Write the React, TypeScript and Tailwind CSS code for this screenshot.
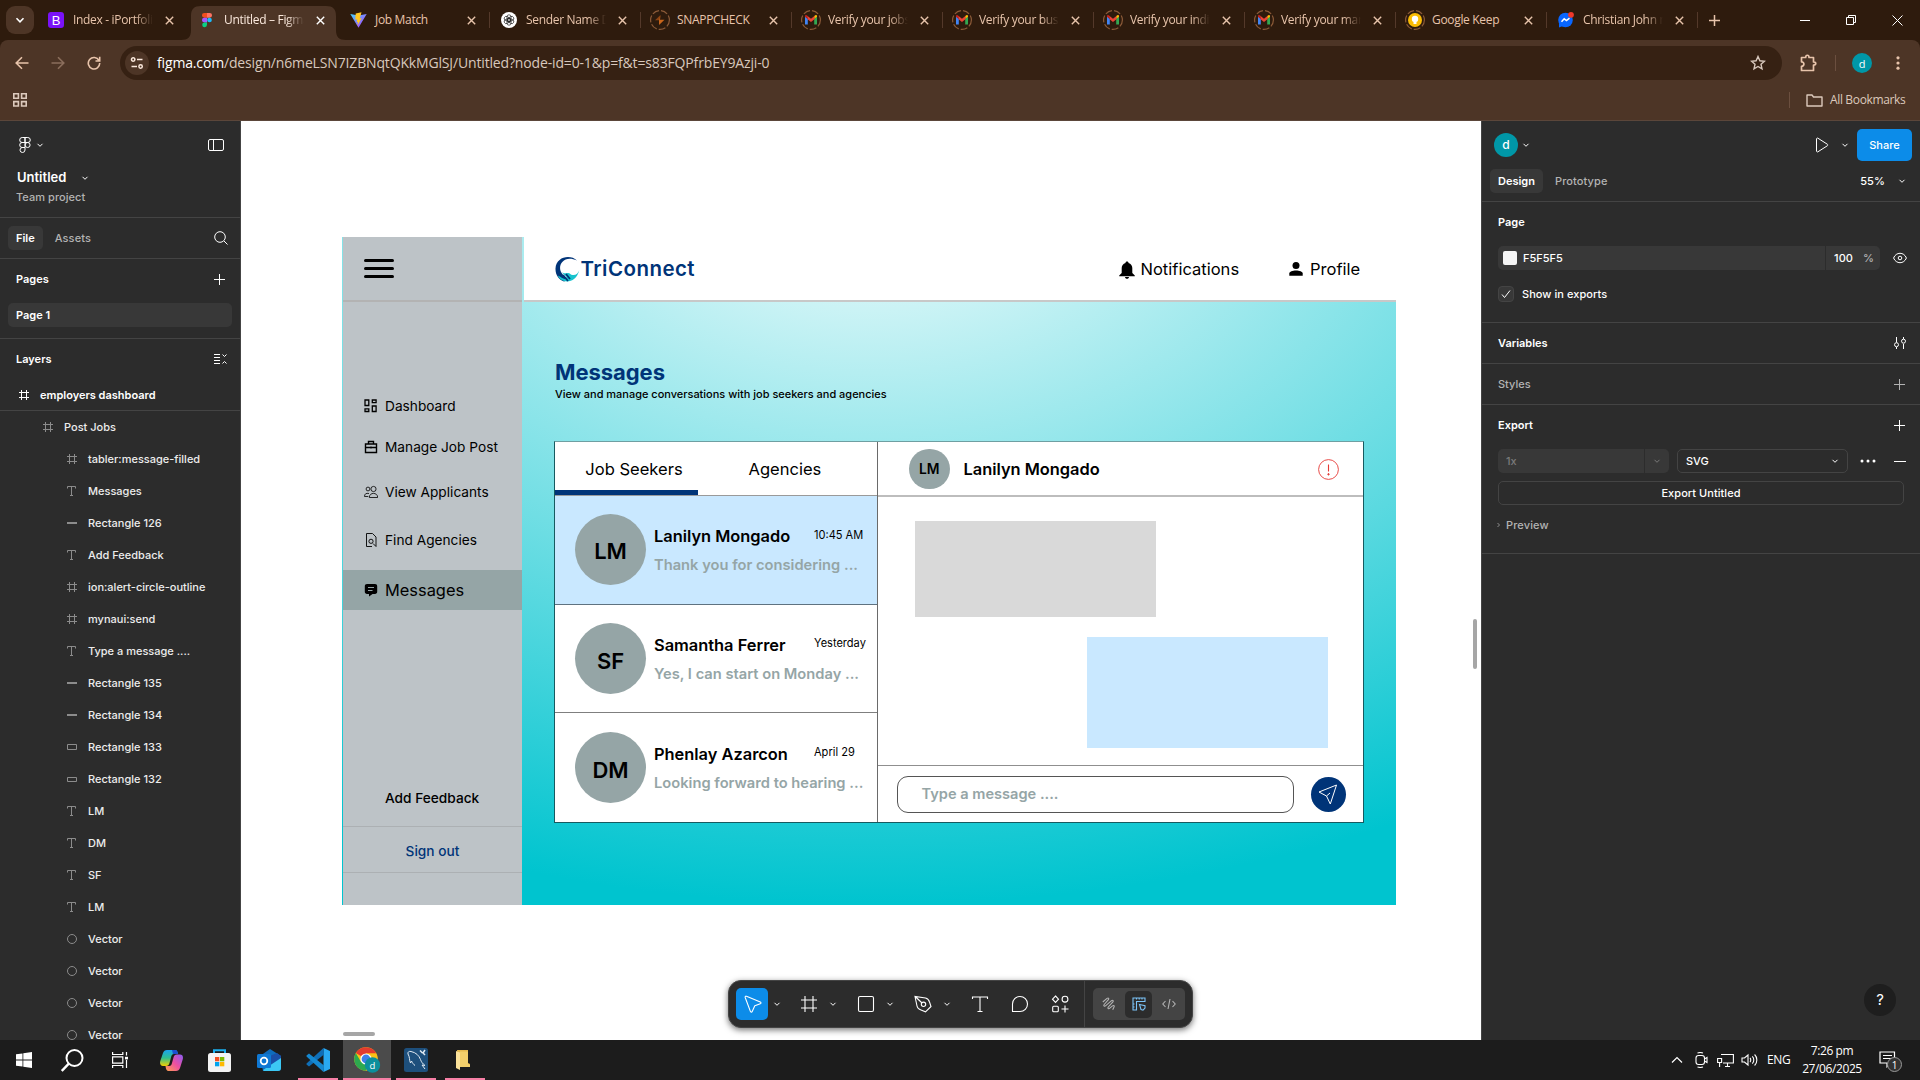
import type { ReactNode } from "react";

type IconProps = { className?: string };

function Chevron({ className = "" }: IconProps) {
  return (
    <svg className={"shrink-0 " + className} width="8" height="8" viewBox="0 0 8 8" fill="none" stroke="currentColor" strokeWidth="1">
      <path d="M1.5 2.8 4 5.3 6.5 2.8" />
    </svg>
  );
}

/* ---------- browser ---------- */

function GmailIcon() {
  return (
    <svg width="20" height="20" viewBox="0 0 20 20" className="-mx-0.5 shrink-0">
      <circle cx="10" cy="10" r="9.4" fill="none" stroke="#8b5a38" strokeWidth="1.2" strokeDasharray="7 2" />
      <path d="M4 6.5V14.500h2.800V9z" fill="#4285f4" />
      <path d="M16 6.5V14.500h-2.800V9z" fill="#34a853" />
      <path d="M4 6.800 6.800 9V6L5.600 5.200C4.800 4.800 4 5.400 4 6.200z" fill="#c5221f" />
      <path d="M16 6.800 13.200 9V6l1.200-.8c.8-.4 1.600.2 1.600 1z" fill="#fbbc04" />
      <path d="M6.600 6 10 8.800 13.400 6v3.200L10 12 6.600 9.200z" fill="#ea4335" />
    </svg>
  );
}

const FAVICONS: Record<string, ReactNode> = {
  bootstrap: (
    <span className="flex size-4 shrink-0 items-center justify-center rounded-[3px] bg-[#7a12f8] font-['Liberation_Sans'] text-[13px] leading-none text-white">B</span>
  ),
  figma: (
    <svg width="16" height="16" viewBox="0 0 16 16" className="shrink-0">
      <path d="M5.300 1H8v4.700H5.300a2.350 2.350 0 0 1 0-4.700z" fill="#f24e1e" />
      <path d="M8 1h2.700a2.350 2.350 0 0 1 0 4.700H8z" fill="#ff7262" />
      <path d="M5.300 5.700H8v4.700H5.300a2.350 2.350 0 0 1 0-4.700z" fill="#a259ff" />
      <circle cx="10.500" cy="8" r="2.350" fill="#1abcfe" />
      <path d="M5.300 10.400H8v2.400a2.400 2.400 0 1 1-2.700-2.400z" fill="#0acf83" />
    </svg>
  ),
  vite: (
    <svg width="17" height="16" viewBox="0 0 17 16" className="shrink-0">
      <defs>
        <linearGradient id="vg" x1="0" y1="0" x2="1" y2="1">
          <stop offset="0" stopColor="#41d1ff" />
          <stop offset="1" stopColor="#bd34fe" />
        </linearGradient>
      </defs>
      <path d="M.3 2 8.500 15.800 16.700 2 8.500 3.500z" fill="url(#vg)" />
      <path d="m11.500.3-5.800 1.200-.4 6.200 1.900-.4-.5 3 1.300-.4-.6 3.600 4.300-7.300-2 .4.900-3.200z" fill="#ffc720" />
    </svg>
  ),
  gpt: (
    <svg width="16" height="16" viewBox="0 0 16 16" className="shrink-0">
      <circle cx="8" cy="8" r="8" fill="#fff" />
      <g fill="none" stroke="#222" strokeWidth=".7">
        <rect x="6" y="2.800" width="4" height="6.600" rx="2" />
        <rect x="6" y="2.800" width="4" height="6.600" rx="2" transform="rotate(60 8 8)" />
        <rect x="6" y="2.800" width="4" height="6.600" rx="2" transform="rotate(120 8 8)" />
        <rect x="6" y="2.800" width="4" height="6.600" rx="2" transform="rotate(180 8 8)" />
        <rect x="6" y="2.800" width="4" height="6.600" rx="2" transform="rotate(240 8 8)" />
        <rect x="6" y="2.800" width="4" height="6.600" rx="2" transform="rotate(300 8 8)" />
      </g>
    </svg>
  ),
  snapp: (
    <svg width="20" height="20" viewBox="0 0 20 20" className="-mx-0.5 shrink-0">
      <circle cx="10" cy="10" r="9.400" fill="none" stroke="#8b5a38" strokeWidth="1.2" strokeDasharray="7 2" />
      <path d="M10.500 5 5 10.200h4.500z" fill="#8a4314" />
      <path d="M9 15 14.500 9.800H10l.5-4.800-1.500 5.500z" fill="#c9651a" />
    </svg>
  ),
  gmail: <GmailIcon />,
  keep: (
    <svg width="20" height="20" viewBox="0 0 20 20" className="-mx-0.5 shrink-0">
      <circle cx="10" cy="10" r="9.400" fill="none" stroke="#8b5a38" strokeWidth="1.2" strokeDasharray="7 2" />
      <circle cx="10" cy="10" r="7" fill="#fbbc04" />
      <circle cx="10" cy="9" r="3.200" fill="#fff" />
      <path d="M8.500 12h3v2h-3z" fill="#fff" />
    </svg>
  ),
  messenger: (
    <svg width="16" height="16" viewBox="0 0 16 16" className="shrink-0 overflow-visible">
      <circle cx="7.500" cy="8" r="7.300" fill="#0866ff" />
      <path d="M1 11v4.500l4-1.500z" fill="#0866ff" />
      <path d="m3.500 9.800 2.700-3 2.300 1.800 3-2.400" fill="none" stroke="#fff" strokeWidth="1.500" />
      <circle cx="13" cy="2.800" r="2.900" fill="#f0382b" />
    </svg>
  ),
};

const TABS = [
  { icon: "bootstrap", label: "Index - iPortfolio", active: false, line: false },
  { icon: "figma", label: "Untitled – Figma", active: true, line: false },
  { icon: "vite", label: "Job Match", active: false, line: true },
  { icon: "gpt", label: "Sender Name Dis", active: false, line: true },
  { icon: "snapp", label: "SNAPPCHECK", active: false, line: true },
  { icon: "gmail", label: "Verify your jobstr", active: false, line: true },
  { icon: "gmail", label: "Verify your busine", active: false, line: true },
  { icon: "gmail", label: "Verify your indivi", active: false, line: true },
  { icon: "gmail", label: "Verify your market", active: false, line: true },
  { icon: "keep", label: "Google Keep", active: false, line: true },
  { icon: "messenger", label: "Christian John me", active: false, line: true },
];

function TabStrip() {
  return (
    <div className="flex h-10 bg-[#2e1b0d] text-[#e8c4ab]">
      <div className="flex w-[37px] items-center pl-1.5">
        <div className="flex size-7 items-center justify-center rounded-[9px] bg-[#4d3526] text-white">
          <svg width="10" height="10" viewBox="0 0 10 10" fill="none" stroke="currentColor" strokeWidth="1.600"><path d="m1.500 3.300 3.500 3.500 3.500-3.500" /></svg>
        </div>
      </div>
      {TABS.map((t, i) => (
        <div key={i} className="relative flex w-[151px] items-center">
          {t.active && (
            <svg className="absolute -left-[7px] top-1.5" width="165" height="34" viewBox="0 0 165 34">
              <path d="M0 34c7 0 10-3 10-10V10C10 3 13 0 20 0h125c7 0 10 3 10 10v14c0 7 3 10 10 10z" fill="#4d3526" />
            </svg>
          )}
          <div className="relative flex w-full items-center pl-[11px]">
            <div className="flex w-4 justify-center">{FAVICONS[t.icon]}</div>
            <div className={"ml-2 w-[81px] overflow-hidden whitespace-nowrap pl-px text-xs tracking-[-0.32px] " + (t.label.length > 12 ? "[mask-image:linear-gradient(90deg,#000_78%,transparent)] " : "") + (t.active ? "text-[#fbe9dd]" : "")}>{t.label}</div>
            <svg className={"ml-[11.5px] shrink-0 " + (t.active ? "text-white" : "")} width="9" height="9" viewBox="0 0 9 9" stroke="currentColor" strokeWidth="1.400"><path d="m.8.8 7.400 7.400M8.200.8.800 8.200" /></svg>
          </div>
          {t.line && <div className="h-4 w-px shrink-0 bg-[#54392a]" />}
        </div>
      ))}
      <div className="flex grow items-center pl-[11px]">
        <svg width="11" height="11" viewBox="0 0 11 11" stroke="currentColor" strokeWidth="1.500"><path d="M5.500 0v11M0 5.500h11" /></svg>
      </div>
      <div className="flex w-[138px] items-center text-white">
        <div className="flex w-[46px] justify-center"><div className="h-px w-2.5 bg-white" /></div>
        <div className="flex w-[46px] justify-center">
          <svg width="10" height="10" viewBox="0 0 10 10" fill="none" stroke="currentColor"><path d="M.5 2.500h7v7h-7zM2.500 2.500v-2h7v7h-2" /></svg>
        </div>
        <div className="flex w-[46px] justify-center">
          <svg width="11" height="11" viewBox="0 0 11 11" stroke="currentColor"><path d="m.5.5 10 10M10.500.5l-10 10" /></svg>
        </div>
      </div>
    </div>
  );
}

function AddressBar() {
  return (
    <div className="bg-[#2e1b0d]">
      <div className="h-[81px] rounded-t-[8px] border-b border-[#5b463a] bg-[#4d3526] text-[#e8c4ab]">
        <div className="flex h-[46px] items-center">
          <svg className="ml-[15px]" width="14" height="14" viewBox="0 0 14 14" fill="none" stroke="currentColor" strokeWidth="1.600"><path d="M13.500 7H1.500M7 1.200 1.200 7 7 12.800" /></svg>
          <svg className="ml-[22px] text-[#8b6e5c]" width="14" height="14" viewBox="0 0 14 14" fill="none" stroke="currentColor" strokeWidth="1.600"><path d="M.5 7h12M7 1.200 12.800 7 7 12.800" /></svg>
          <svg className="ml-[22px]" width="14" height="14" viewBox="0 0 14 14" fill="none" stroke="currentColor" strokeWidth="1.600"><path d="M12 4.500A5.700 5.700 0 1 0 12.700 7M12.700.800V5H8.500" /></svg>
          <div className="ml-[19px] flex h-[34px] w-[1662px] items-center rounded-full bg-[#362113] pl-[5px] text-[#d8c8bd]">
            <div className="flex size-6 items-center justify-center rounded-full bg-[#4d3526]">
              <svg width="14" height="14" viewBox="0 0 14 14" fill="none" stroke="#fbe9dd" strokeWidth="1.500"><circle cx="3.200" cy="3.500" r="1.700" /><path d="M7 3.500h5.500M1.500 10.500H7" /><circle cx="10.600" cy="10.500" r="1.700" /></svg>
            </div>
            <div className="ml-2 text-sm tracking-[-0.155px] whitespace-nowrap">
              <span className="text-white">figma.com</span>/design/n6meLSN7IZBNqtQKkMGlSJ/Untitled?node-id=0-1&amp;p=f&amp;t=s83FQPfrbEY9Azji-0
            </div>
            <svg className="mr-[16px] ml-auto" width="16" height="16" viewBox="0 0 16 16" fill="none" stroke="currentColor" strokeWidth="1.400"><path d="m8 1.500 1.900 4.300 4.600.4-3.500 3.100 1 4.600L8 11.500l-4 2.400 1-4.600L1.500 6.200l4.600-.4z" /></svg>
          </div>
          <svg className="ml-[18px]" width="17" height="18" viewBox="0 0 17 18" fill="none" stroke="currentColor" strokeWidth="1.700"><path d="M1.500 3.500h4.200c0-3 3.300-3 3.300 0h4.500V8c3 0 3 3 0 3v5.500h-12v-4.200c3.200 0 3.200-4.500 0-4.500z" strokeLinejoin="round" /></svg>
          <div className="ml-[18px] h-4 w-px bg-[#6b4f3f]" />
          <div className="ml-[16px] flex size-5 items-center justify-center rounded-full bg-[#0097a7] text-[11px] leading-none text-white">d</div>
          <svg className="ml-[24px]" width="4" height="14" viewBox="0 0 4 14" fill="currentColor"><circle cx="2" cy="1.800" r="1.600" /><circle cx="2" cy="7" r="1.600" /><circle cx="2" cy="12.200" r="1.600" /></svg>
        </div>
        <div className="flex h-7 items-center text-[#dcc9bc]">
          <svg className="ml-[13px]" width="14" height="14" viewBox="0 0 14 14" fill="none" stroke="currentColor" strokeWidth="1.600"><path d="M.8.8h4.600v4.400H.8zM8.600.8h4.600v4.400H8.600zM.8 8.600h4.600V13H.8zM8.600 8.600h4.600V13H8.600z" /></svg>
          <div className="ml-auto h-4 w-px bg-[#6b4f3f]" />
          <svg className="ml-[16px]" width="17" height="13" viewBox="0 0 17 13" fill="none" stroke="currentColor" strokeWidth="1.400"><path d="M1 1h5l1.500 2H16v9H1z" strokeLinejoin="round" /></svg>
          <div className="mr-[15px] ml-[7px] w-[75px] text-xs tracking-[-0.35px] whitespace-nowrap">All Bookmarks</div>
        </div>
      </div>
    </div>
  );
}

/* ---------- left panel ---------- */

const LAYER_ICONS: Record<string, ReactNode> = {
  frame: <path d="M2.500 0v10M7.500 0v10M0 2.500h10M0 7.500h10" />,
  text: <path d="M.5 2.500V.5h8v2M4.500.5v9M3 9.500h3" />,
  line: <path d="M0 5h10" strokeWidth="2" />,
  rect: <path d="M.5 2.500h9v5h-9z" />,
  thin: <path d="M.5 3.500h9v4h-9z" />,
  circle: <circle cx="5" cy="5" r="4.500" />,
};

const LAYERS: [string, string][] = [
  ["frame", "tabler:message-filled"],
  ["text", "Messages"],
  ["line", "Rectangle 126"],
  ["text", "Add Feedback"],
  ["frame", "ion:alert-circle-outline"],
  ["frame", "mynaui:send"],
  ["text", "Type a message ...."],
  ["line", "Rectangle 135"],
  ["line", "Rectangle 134"],
  ["rect", "Rectangle 133"],
  ["thin", "Rectangle 132"],
  ["text", "LM"],
  ["text", "DM"],
  ["text", "SF"],
  ["text", "LM"],
  ["circle", "Vector"],
  ["circle", "Vector"],
  ["circle", "Vector"],
  ["circle", "Vector"],
];

function LayerIcon({ kind, className }: { kind: string; className: string }) {
  return (
    <svg className={"mr-[11px] shrink-0 " + className} width="10" height="10" viewBox="0 0 10 10" fill="none" stroke="currentColor">
      {LAYER_ICONS[kind]}
    </svg>
  );
}

function LeftPanel() {
  return (
    <aside className="h-[919px] w-[241px] shrink-0 overflow-hidden border-r border-[#444] bg-[#2c2c2c] text-[11px] font-medium text-white">
      <div className="flex h-12 items-center pr-4 pl-[19px]">
        <svg width="12" height="16" viewBox="0 0 12 16" fill="none" stroke="currentColor"><path d="M6 .5H3.200a2.500 2.500 0 0 0 0 5H6zm0 0h2.800a2.500 2.500 0 0 1 0 5H6zM6 5.500H3.200a2.500 2.500 0 0 0 0 5H6zm0 5H3.200A2.500 2.500 0 1 0 6 13z" /><circle cx="8.600" cy="8" r="2.500" /></svg>
        <Chevron className="ml-[5px]" />
        <svg className="ml-auto" width="16" height="12" viewBox="0 0 16 12" fill="none" stroke="currentColor"><rect x=".5" y=".5" width="15" height="11" rx="1.500" /><path d="M5.500.5v11" /></svg>
      </div>
      <div className="flex h-[18px] items-center pl-[17px] text-[13px] font-semibold">
        Untitled
        <Chevron className="ml-[15px]" />
      </div>
      <div className="mt-0.5 flex h-4 items-center pl-4 tracking-[0.05px] text-[#b3b3b3]">Team project</div>
      <div className="mt-3 flex h-[42px] items-center border-y border-[#444] pr-[12px] pl-2">
        <div className="flex h-6 items-center rounded-[5px] bg-[#383838] px-2 font-semibold">File</div>
        <div className="ml-[12px] tracking-[0.1px] text-[#b3b3b3]">Assets</div>
        <svg className="ml-auto" width="14" height="14" viewBox="0 0 14 14" fill="none" stroke="currentColor"><circle cx="6" cy="6" r="5.300" /><path d="m10 10 3.500 3.500" /></svg>
      </div>
      <div className="flex h-10 items-center justify-between pr-[15px] pl-4 font-semibold">
        Pages
        <svg width="11" height="11" viewBox="0 0 11 11" stroke="currentColor"><path d="M5.500 0v11M0 5.500h11" /></svg>
      </div>
      <div className="mx-2 mt-1 flex h-6 items-center rounded-[5px] bg-[#383838] pl-2 font-semibold">Page 1</div>
      <div className="mt-[11px] flex h-[41px] items-center justify-between border-t border-[#444] pr-[13px] pl-4 font-semibold">
        Layers
        <svg width="13" height="12" viewBox="0 0 13 12" fill="none" stroke="currentColor"><path d="M0 1.500h6M0 4.500h6M0 7.500h6M0 10.500h6M8.500 1.500l2 2 2-2M8.500 10.500l2-2 2 2" /></svg>
      </div>
      <div className="flex h-8 items-center border-b border-[#444] pt-px pl-[19px] font-semibold">
        <LayerIcon kind="frame" className="text-white" />
        employers dashboard
      </div>
      <div className="flex h-8 items-center pl-[43px] text-[#ececec]">
        <LayerIcon kind="frame" className="text-[#8c8c8c]" />
        Post Jobs
      </div>
      {LAYERS.map(([kind, label], i) => (
        <div key={i} className="flex h-8 items-center pl-[67px] text-[#ececec]">
          <LayerIcon kind={kind} className="text-[#8c8c8c]" />
          {label}
        </div>
      ))}
    </aside>
  );
}

/* ---------- right panel ---------- */

function Plus() {
  return <svg width="11" height="11" viewBox="0 0 11 11" stroke="currentColor"><path d="M5.500 0v11M0 5.500h11" /></svg>;
}

function RightPanel() {
  return (
    <aside className="flex h-[919px] w-[439px] shrink-0 flex-col border-l border-[#444] bg-[#2c2c2c] text-[11px] font-medium text-white">
      <div className="flex h-12 items-center pr-2 pl-3">
        <div className="flex size-6 items-center justify-center rounded-full bg-[#0097a7] text-[12px] leading-none">d</div>
        <Chevron className="ml-1" />
        <svg className="ml-auto" width="14" height="16" viewBox="0 0 14 16" fill="none" stroke="currentColor"><path d="M1.500 2v12c0 .8.700 1.200 1.400.8l9.400-6c.7-.4.700-1.200 0-1.600l-9.400-6c-.7-.4-1.400 0-1.400.8z" /></svg>
        <Chevron className="mr-2 ml-[12px]" />
        <div className="flex h-8 w-[55px] items-center justify-center rounded-[5px] bg-[#0c8ce9]">Share</div>
      </div>
      <div className="flex h-[33px] items-start border-b border-[#444] px-2">
        <div className="flex h-6 items-center rounded-[5px] bg-[#383838] px-2 font-semibold">Design</div>
        <div className="ml-[12px] flex h-6 items-center tracking-[0.1px] text-[#b3b3b3]">Prototype</div>
        <div className="ml-auto flex h-6 items-center tracking-[0.1px]">55%</div>
        <Chevron className="mt-2 mr-[6px] ml-[13px]" />
      </div>
      <div className="h-[121px] border-b border-[#444] pl-4">
        <div className="flex h-10 items-center font-semibold">Page</div>
        <div className="mt-1 flex h-6 items-center">
          <div className="flex h-6 w-[327px] items-center rounded-l-[5px] bg-[#383838] pl-[5px]">
            <div className="mr-1.5 size-3.5 rounded-[2px] bg-[#f5f5f5]" />
            F5F5F5
          </div>
          <div className="ml-px flex h-6 w-[54px] items-center rounded-r-[5px] bg-[#383838] pl-[8px] tracking-[0.1px]">
            100<span className="ml-[10px] text-[#b3b3b3]">%</span>
          </div>
          <svg className="ml-[13px]" width="14" height="12" viewBox="0 0 14 12" fill="none" stroke="currentColor"><path d="M.6 6C3-.3 11-.3 13.400 6 11 12.300 3 12.300.6 6z" /><circle cx="7" cy="6" r="1.800" /></svg>
        </div>
        <div className="mt-4 flex h-4 items-center tracking-[0.05px]">
          <div className="mr-2 flex size-4 items-center justify-center rounded-[4px] border border-[#444] bg-[#383838]">
            <svg width="10" height="10" viewBox="0 0 10 10" fill="none" stroke="currentColor"><path d="M1 5.500 3.500 8.500 9 1.500" /></svg>
          </div>
          Show in exports
        </div>
      </div>
      <div className="flex h-[41px] items-center justify-between border-b border-[#444] pr-[14px] pl-4 font-semibold">
        Variables
        <svg width="12" height="12" viewBox="0 0 12 12" fill="none" stroke="currentColor"><path d="M2.500 0v5.500M2.500 10v2M9.500 7v5M9.500 0v2" /><circle cx="2.500" cy="7.700" r="2" /><circle cx="9.500" cy="4.200" r="2" /></svg>
      </div>
      <div className="flex h-[41px] items-center justify-between border-b border-[#444] pr-[15px] pl-4 text-[#b3b3b3]">
        Styles
        <Plus />
      </div>
      <div className="h-[149px] border-b border-[#444] pl-4">
        <div className="flex h-10 items-center justify-between pr-[15px] font-semibold">
          Export
          <Plus />
        </div>
        <div className="mt-1 flex h-6 items-center">
          <div className="flex h-6 w-[146px] items-center rounded-l-[5px] bg-[#383838] pl-2 text-[#7a7a7a]">1x</div>
          <div className="ml-px flex h-6 w-6 items-center justify-center rounded-r-[5px] bg-[#383838] text-[#7a7a7a]"><Chevron /></div>
          <div className="ml-2 flex h-6 w-[171px] items-center justify-between rounded-[5px] border border-[#444] pr-[8px] pl-2">SVG<Chevron /></div>
          <svg className="ml-[12px]" width="16" height="4" viewBox="0 0 16 4" fill="currentColor"><circle cx="2" cy="2" r="1.500" /><circle cx="8" cy="2" r="1.500" /><circle cx="14" cy="2" r="1.500" /></svg>
          <div className="ml-[18px] h-px w-3 bg-white" />
        </div>
        <div className="mt-2 flex h-6 w-[406px] items-center justify-center rounded-[5px] border border-[#444] tracking-[0.05px]">Export Untitled</div>
        <div className="mt-2 flex h-6 items-center text-[#b3b3b3]">
          <svg className="mr-1 -ml-0.5" width="6" height="8" viewBox="0 0 6 8" fill="none" stroke="#8c8c8c"><path d="M1.500 2 3.500 4l-2 2" /></svg>
          <span className="tracking-[0.12px]">Preview</span>
        </div>
      </div>
      <div className="mt-auto mr-6 mb-6 ml-auto flex size-8 items-center justify-center rounded-full bg-[#1e1e1e] text-[15px] font-normal">?</div>
    </aside>
  );
}

/* ---------- dashboard design ---------- */

const NAV = [
  {
    label: "Dashboard",
    gap: "mt-[84px]",
    icon: <path d="M1 1h3.800v5.500H1zM8.300 1h3.800v2.700H8.300zM8.300 7h3.800v5.500H8.300zM1 9.800h3.800v2.700H1z" strokeWidth="1.300" />,
  },
  {
    label: "Manage Job Post",
    gap: "mt-px",
    icon: <path d="M1.500 4h11v8.500h-11zM4.500 4V1.500h5V4M1.500 7.500h11M7 6.500v2" strokeWidth="1.400" />,
  },
  {
    label: "View Applicants",
    gap: "mt-[5px]",
    icon: (
      <g strokeWidth=".8">
        <circle cx="9.500" cy="4" r="2.600" /><circle cx="4" cy="4" r="1.900" />
        <path d="M5.300 12.500c0-5.500 8.400-5.500 8.400 0zM5 8.500C2 7.800.5 9 .5 11.500h3.800" />
      </g>
    ),
  },
  {
    label: "Find Agencies",
    gap: "mt-[8px]",
    icon: (
      <g strokeWidth=".9">
        <path d="M8 13.500H2.500v-13h6l3.500 3.500v9.500l-3-3" /><circle cx="7" cy="8.300" r="2.100" />
      </g>
    ),
  },
];

function DesignSidebar() {
  return (
    <div className="mr-[1.5px] ml-[1.5px] flex w-[179px] shrink-0 flex-col bg-[#bdc3c7] text-[13.700px] text-black">
      <div className="flex h-[65px] shrink-0 flex-col justify-center gap-[5px] border-b-2 border-[#b3b3b3] pl-[20.5px]">
        <div className="h-[3px] w-[30px] rounded-full bg-black" />
        <div className="h-[3px] w-[30px] rounded-full bg-black" />
        <div className="h-[3px] w-[30px] rounded-full bg-black" />
      </div>
      {NAV.map((n) => (
        <div key={n.label} className={"flex h-10 shrink-0 items-center whitespace-nowrap pl-[21px] " + n.gap}>
          <svg className="mr-[7px] shrink-0" width="14" height="14" viewBox="0 0 14 14" fill="none" stroke="#000">{n.icon}</svg>
          {n.label}
        </div>
      ))}
      <div className="mt-[10px] flex h-10 shrink-0 items-center bg-[#95a5a6] pl-[21px] text-[16.400px]">
        <svg className="mr-[7px]" width="14" height="14" viewBox="0 0 14 14"><path d="M3 1h8c1.300 0 2.200.9 2.200 2.200v5.600c0 1.300-.9 2.200-2.200 2.200H8.500L5 13.500V11H3C1.700 11 .8 10.100.8 8.800V3.200C.8 1.900 1.700 1 3 1z" /><path d="M4 4.500h6M4 7.500h4.500" stroke="#95a5a6" strokeWidth="1.200" /></svg>
        Messages
      </div>
      <div className="mt-auto flex h-5 items-center pl-[42px] font-medium">Add Feedback</div>
      <div className="mt-[18px] flex h-[47px] shrink-0 items-center justify-center border-y border-[#acb0b3] pt-[3px] font-medium text-[#003478]">Sign out</div>
      <div className="h-8 shrink-0" />
    </div>
  );
}

function DesignHeader() {
  return (
    <div className="flex h-[65px] items-center border-b-2 border-[#c8c8c8] bg-white pl-[31px] text-[16.550px] text-black">
      <svg width="25" height="26" viewBox="0 0 25 26">
        <path d="M22 4.500C15-2 1 1 .5 12.500.3 19 4 24 9 25.500l4-1.500c-1-3-5-4-7-8C2.500 9 9-1.500 22 4.500z" fill="#003478" />
        <path d="M24.300 14c-1 3-3 5-6 5-3 .5-3-2.500-6-2-2 .3-3 .5-5.500-.5 3 2.500 3 3 5 4.500l-2 2c-2-.5-4-2-7-3.500 3 8 18 9.500 21.500-5.500z" fill="#17c3cd" />
        <path d="m8 19 5 6M11 18l4 5" stroke="#003478" strokeWidth="1.800" />
      </svg>
      <div className="mt-0.5 ml-px text-[20.500px] font-semibold tracking-[0.45px] text-[#003478]">TriConnect</div>
      <svg className="mt-[3px] ml-auto" width="16" height="18" viewBox="0 0 16 18"><path d="M8 .5c1 0 1.500.6 1.500 1.400C12 2.600 13.300 4.600 13.300 7v5l2.500 2.500v.8H.2v-.8L2.700 12V7c0-2.400 1.300-4.400 3.800-5.100C6.500 1.100 7 .5 8 .5zM6 16h4c0 2.400-4 2.400-4 0z" /></svg>
      <div className="mt-[2px] ml-[6px] w-[100px]">Notifications</div>
      <svg className="ml-[48px]" width="14" height="14" viewBox="0 0 14 14"><circle cx="7" cy="3.600" r="3.500" /><path d="M.3 13.800v-2.200c0-4 13.400-4 13.400 0v2.200z" /></svg>
      <div className="mt-[2px] mr-[36px] ml-[7.5px] w-[50px]">Profile</div>
    </div>
  );
}

const THREADS = [
  { initials: "LM", name: "Lanilyn Mongado", time: "10:45 AM", text: "Thank you for considering ...", bg: "bg-[#c9e8ff]", edge: "border-b border-[#5f7280]", pad: "pt-[4px]" },
  { initials: "SF", name: "Samantha Ferrer", time: "Yesterday", text: "Yes, I can start on Monday ...", bg: "bg-white", edge: "border-b border-[#7f7f7f]", pad: "pt-[6px]" },
  { initials: "DM", name: "Phenlay Azarcon", time: "April 29", text: "Looking forward to hearing ...", bg: "bg-white", edge: "", pad: "pt-[6px]" },
];

function MessagesCard() {
  return (
    <div className="flex h-[382px] w-[810px] border border-[#175a60] border-t-[#6f9fa2] bg-white text-black">
      <div className="flex w-[323px] flex-col border-r border-[#6a6a6a]">
        <div className="flex h-[54px] shrink-0 border-b border-[#9a9a9a] text-[16.550px]">
          <div className="flex w-[143px] items-center justify-center border-b-[5px] border-[#003478] pt-[7px] pl-[15px] whitespace-nowrap">Job Seekers</div>
          <div className="flex items-center pt-[2px] pl-[50.5px]">Agencies</div>
        </div>
        {THREADS.map((t) => (
          <div key={t.initials} className={"flex h-[109px] items-center pl-5 " + t.bg + " " + t.edge}>
            <div className={"flex size-[71px] shrink-0 items-center justify-center rounded-full bg-[#95a5a6] text-[22px] font-semibold " + t.pad}>{t.initials}</div>
            <div className="ml-[8px] grow pt-[2px]">
              <div className="flex h-6 items-center">
                <div className="w-[160px] text-[16.400px] font-semibold whitespace-nowrap">{t.name}</div>
                <div className="-mt-[3px] text-[11.050px] whitespace-nowrap">{t.time}</div>
              </div>
              <div className="mt-[5px] flex h-6 items-center text-[14.700px] font-semibold whitespace-nowrap text-[#95a5a6]">{t.text}</div>
            </div>
          </div>
        ))}
      </div>
      <div className="flex grow flex-col">
        <div className="flex h-[55px] items-center border-b-2 border-[#bdbdbd] pt-px pr-6 pl-[31px]">
          <div className="flex size-[40.5px] items-center justify-center rounded-full bg-[#95a5a6] text-[13.800px] font-semibold">LM</div>
          <div className="mt-px ml-[14px] text-[16.400px] font-semibold">Lanilyn Mongado</div>
          <svg className="ml-auto" width="21" height="21" viewBox="0 0 21 21" fill="none" stroke="#e53935"><circle cx="10.500" cy="10.500" r="9.900" strokeWidth=".9" /><path d="M10.500 5.500v7" strokeWidth="1.100" /><circle cx="10.500" cy="15.300" r=".7" fill="#e53935" /></svg>
        </div>
        <div className="flex h-[269px] flex-col border-b border-[#8f8f8f] pr-[35px] pl-[36.5px]">
          <div className="mt-[23.5px] h-[96px] w-[241px] bg-[#d9d9d9]" />
          <div className="mt-5 ml-auto h-[111.5px] w-[241px] bg-[#c9e8ff]" />
        </div>
        <div className="flex grow items-center pt-px pl-[19px]">
          <div className="flex h-[37px] w-[397px] items-center rounded-[11px] border border-[#555] pt-px pl-[23.5px] text-[14.600px] font-semibold text-[#95a5a6]">Type a message ....</div>
          <div className="ml-[16.5px] flex size-[35.5px] items-center justify-center rounded-full bg-[#003478]">
            <svg width="20" height="21" viewBox="0 0 20 21" fill="none" stroke="#fff" strokeWidth="1" strokeLinejoin="round"><path d="M18.500 1 1 8l7.500 4 3.800 8zM8.500 12l3.500-3" /></svg>
          </div>
        </div>
      </div>
    </div>
  );
}

function DashboardDesign() {
  return (
    <div className="mt-[116px] ml-[100.5px] flex h-[668px] w-[1054.5px] overflow-hidden bg-[radial-gradient(1150px_735px_at_527px_-67px,#fafefe_0%,#00c4cf_100%)]">
      <DesignSidebar />
      <div className="grow">
        <DesignHeader />
        <div className="pt-[56px] pl-[30.5px]">
          <div className="flex h-7 items-center pl-px text-[22px] font-bold tracking-[-0.05px] text-[#003478]">Messages</div>
          <div className="flex h-4 items-center pl-px text-[10.970px] font-medium text-black">View and manage conversations with job seekers and agencies</div>
          <div className="h-[39px]" />
          <MessagesCard />
        </div>
      </div>
    </div>
  );
}

/* ---------- figma toolbar ---------- */

function Tool({ gap, chevron, children }: { gap: string; chevron?: boolean; children: ReactNode }) {
  return (
    <div className={"flex items-center " + gap}>
      <svg width="18" height="18" viewBox="0 0 18 18" fill="none" stroke="currentColor" strokeWidth="1.100">{children}</svg>
      {chevron && <Chevron className="ml-[11px]" />}
    </div>
  );
}

function Toolbar() {
  return (
    <div className="absolute top-[859px] left-[487px] flex h-12 w-[465px] items-center rounded-[13px] border border-[#444] bg-[#2c2c2c] pl-[7px] text-white shadow-[0_2px_6px_rgba(0,0,0,0.55)]">
      <div className="flex size-8 items-center justify-center rounded-[5px] bg-[#0c8ce9] pl-px">
        <svg width="18" height="18" viewBox="0 0 18 18" fill="none" stroke="currentColor" strokeWidth="1.100" strokeLinejoin="round"><path d="M1.200 2.500c-.3-.9.500-1.600 1.300-1.200L16.300 7c.9.400.9 1.500 0 1.800l-5.500 2-2.600 5.700c-.4.900-1.500.8-1.800-.1z" /></svg>
      </div>
      <Chevron className="ml-[5px]" />
      <Tool gap="ml-[19px]" chevron><path d="M5 1v16M13 1v16M1 5h16M1 13h16" /></Tool>
      <Tool gap="ml-[20px]" chevron><rect x="1.500" y="1.500" width="15" height="15" rx="1.500" /></Tool>
      <Tool gap="ml-[20px]" chevron><path d="M1 1.500 3 11c.4 2 2 3.500 4 4l4.500 1.800L17 11.500 15.500 7c-.6-2-2-3.500-4-4zM1.200 1.500 8 8" /><circle cx="9.500" cy="9.300" r="2.200" /></Tool>
      <Tool gap="ml-[20px]"><path d="M1.500 4V2h15v2M9 2v14.500M6.500 16.500h5" /></Tool>
      <Tool gap="ml-[22px]"><path d="M1.500 16.500V9A7.500 7.500 0 1 1 9 16.500z" strokeLinejoin="round" /></Tool>
      <Tool gap="ml-[22px]"><path d="m4.500 1 3 3.200-3 3.200-3-3.200zM14 10.500v7M10.500 14h7" /><circle cx="14" cy="4.200" r="2.900" /><rect x="1.700" y="11.200" width="5.600" height="5.600" rx="1" /></Tool>
      <div className="ml-[15px] h-[46px] w-px bg-[#444]" />
      <div className="ml-2 flex h-8 w-[92px] items-center rounded-[5px] bg-[#444] text-[#b3b3b3]">
        <svg className="ml-[9px]" width="14" height="14" viewBox="0 0 14 14" fill="none" stroke="currentColor" strokeWidth="1.100"><path d="M.8 5 5 1.400c1.500-1 2.300.2 1.200 1.500L2.200 7.500c-1 1.500.3 2.300 1.600 1.200l5.700-5c1.400-1 2.300.2 1.200 1.500L6.300 10c-1 1.500.3 2.200 1.500 1.200l2.700-2.300c1.300-.9 2.200 0 1.400 1.300l-1.200 2.600" /></svg>
        <div className="ml-[9px] flex size-[27px] items-center justify-center rounded-[5px] bg-[#2c2c2c] text-[#7cc4f8]">
          <svg width="14" height="14" viewBox="0 0 14 14" fill="none" stroke="currentColor" strokeWidth="1.100"><path d="M1 1h12v3.500H4.500V13H1zM4.500 1v1.500M7.200 1v1.500M10 1v1.500M1 7h1.500M1 10h1.500M7.500 7.500 13 8.700v2.300L11 13.200 9 12.500z" /></svg>
        </div>
        <svg className="ml-[10px]" width="14" height="14" viewBox="0 0 14 14" fill="none" stroke="currentColor" strokeWidth="1.100"><path d="M3.500 4 .8 7l2.700 3M10.500 4l2.700 3-2.700 3M8 2 6 12" /></svg>
      </div>
    </div>
  );
}

/* ---------- taskbar ---------- */

function TaskItem({ width, open, active, children }: { width: string; open?: boolean; active?: boolean; children: ReactNode }) {
  return (
    <div className={"relative flex h-10 items-center justify-center " + width + (active ? " bg-[#4b4b4b]" : "")}>
      {children}
      {(open || active) && <div className={"absolute bottom-0 h-0.5 bg-[#f77fa6] " + (active ? "inset-x-0" : "inset-x-1")} />}
    </div>
  );
}

function Taskbar() {
  return (
    <footer className="flex h-10 items-center bg-[#1c1c1c] font-['Open_Sans'] text-white">
      <TaskItem width="w-12"><svg width="16" height="16" viewBox="0 0 16 16" fill="#fff"><path d="M0 2.300 6.500 1.400v6.200H0zM7.300 1.300 16 0v7.600H7.300zM0 8.400h6.500v6.200L0 13.700zM7.300 8.400H16V16l-8.700-1.300z" /></svg></TaskItem>
      <TaskItem width="w-12"><svg width="23" height="23" viewBox="0 0 23 23" fill="none" stroke="#fff" strokeWidth="2"><circle cx="13.500" cy="9" r="8" /><path d="m7.800 14.700-7 7.300" strokeWidth="2.400" /></svg></TaskItem>
      <TaskItem width="w-12"><svg width="16" height="16" viewBox="0 0 16 16" fill="none" stroke="#fff" strokeWidth="1.200"><path d="M.6 0v2.500h10.200V0M.6 16v-2.500h10.200V16M.6 4.800h10.200v6.400H.6zM14.500 0v3.500M14.500 8v8" /><path d="M13 4.800h3v2.600h-3z" fill="#fff" stroke="none" /></svg></TaskItem>
      <TaskItem width="w-[54px]">
        <svg width="23" height="21" viewBox="0 0 23 21">
          <defs>
            <linearGradient id="c1" x1="0" y1="0" x2="0" y2="1"><stop offset="0" stopColor="#1aa3f0" /><stop offset=".5" stopColor="#2fbf8f" /><stop offset="1" stopColor="#f5d000" /></linearGradient>
            <linearGradient id="c2" x1="1" y1="0" x2="0" y2="1"><stop offset="0" stopColor="#8a5cf5" /><stop offset=".5" stopColor="#ee4fa0" /><stop offset="1" stopColor="#ffa34d" /></linearGradient>
          </defs>
          <path d="M7 0h8c2 0 2.500 1.500 3 4h-4c-2 0-2.500 1.500-3 3.500L9.500 13c-.5 2-1.500 3-3.500 3H3c-2.500 0-3.500-2-2.700-5L3 3C3.700 1 5 0 7 0z" fill="url(#c1)" />
          <path d="M16 21H9c-2.500 0-3-1.500-3.500-5H9c2 0 2.500-1 3-3l1.500-5.500C14 5.500 15 4.500 17 4.500h3c2.500 0 3.500 2 2.700 5L20 18c-.7 2-2 3-4 3z" fill="url(#c2)" />
          <path d="M12 0h3c2 0 2.500 1.500 3 4h-5z" fill="#1a4fd0" />
        </svg>
      </TaskItem>
      <TaskItem width="w-[43px]">
        <svg width="23" height="23" viewBox="0 0 23 23" className="-ml-px"><path d="M6 5V1.200h11V5" fill="none" stroke="#1ab0f0" strokeWidth="2" /><rect y="4" width="23" height="19" rx="2.500" fill="#f3f3f3" /><path d="M7 8h4.300v4.300H7z" fill="#f25022" /><path d="M12 8h4.300v4.300H12z" fill="#7fba00" /><path d="M7 13h4.300v4.300H7z" fill="#00a4ef" /><path d="M12 13h4.300v4.300H12z" fill="#ffb900" /></svg>
      </TaskItem>
      <TaskItem width="w-[53px]">
        <svg width="24" height="22" viewBox="0 0 24 22" className="ml-0.5"><path d="M3 7 13 0l11 7v12c0 2-1 3-3 3H6z" fill="#0f6cbd" /><path d="m8 9 12-5 4 3v3L12 18z" fill="#1a4fa8" /><path d="M6 21 24 9v10c0 2-1 3-3 3H7z" fill="#3cc8f4" /><rect y="5" width="14" height="14" rx="1.500" fill="#0f78d4" /><circle cx="7" cy="12" r="3.300" fill="none" stroke="#fff" strokeWidth="1.800" /></svg>
      </TaskItem>
      <TaskItem width="w-12" open>
        <svg width="24" height="24" viewBox="0 0 24 24"><path d="M17.500 0 24 3v18l-6.500 3z" fill="#29a9f2" /><path d="m17.500 0 .5 6.500L3 18.500.5 16.500v-1z" fill="#0f6fb8" /><path d="M.5 8.500v-1L3 5.500l15 12-.5 6.500z" fill="#1588d1" /></svg>
      </TaskItem>
      <div className="w-px" />
      <TaskItem width="w-12" active>
        <svg width="27" height="26" viewBox="0 0 27 26" className="ml-px">
          <circle cx="12" cy="12" r="11.800" fill="#fbc116" /><path d="M12 12 1.800 6A11.800 11.800 0 0 1 22.300 6.200L12 6.200z" fill="#e33b2e" /><path d="M1.800 6A11.800 11.800 0 0 0 11.500 23.800L17 15 7 15z" fill="#2da94f" /><circle cx="12" cy="12" r="5.600" fill="#fff" /><circle cx="12" cy="12" r="4.400" fill="#3f7fe8" />
          <circle cx="18.500" cy="18" r="7.700" fill="#0b8f9c" /><text x="18.500" y="21.500" fontSize="9.500" fill="#fff" textAnchor="middle" fontFamily="Open Sans">d</text>
        </svg>
      </TaskItem>
      <div className="w-px" />
      <TaskItem width="w-12" open>
        <svg width="24" height="24" viewBox="0 0 24 24"><rect width="24" height="24" rx="2.500" fill="#1d4f7c" /><path d="M4 6c-.5-2 1-3 3-2.500 5 1 8 4 9.500 8 .8 2.500 2 4 4.500 6l-3-.5 3 4M4 6c2 3 1 6 2.500 9l1-2c1 2 2 3.500 3.500 4.500" fill="none" stroke="#dfe9f2" strokeWidth="1" /><path d="m16 2.500 2.500 2.500M21 2l-2 3 2 2" stroke="#dfe9f2" strokeWidth="1.500" fill="none" /></svg>
      </TaskItem>
      <div className="w-px" />
      <TaskItem width="w-12" open>
        <svg width="14" height="20" viewBox="0 0 14 20" className="-ml-1"><path d="M1 0h11v13l2 1v3H3z" fill="#e5b94e" /><path d="m0 1 4 1.500V20l-4-2z" fill="#fbe29a" /><path d="M4 1.500h8V14l2 1v2H4z" fill="#f3cf6b" /></svg>
      </TaskItem>

      <div className="ml-auto flex items-center">
        <svg width="12" height="8" viewBox="0 0 12 8" fill="none" stroke="#fff" strokeWidth="1.200"><path d="M1 6.500 6 1.500l5 5" /></svg>
        <svg className="ml-[12px]" width="13" height="16" viewBox="0 0 13 16" fill="none" stroke="#fff" strokeWidth="1.100"><rect x="1" y="3.500" width="8.500" height="9" rx="2.500" /><path d="m9.500 7 2.500-1.500v5L9.500 9M2.500 1c2-.7 3.500-.7 5.500 0M2.500 15c2 .7 3.500.7 5.500 0" /></svg>
        <svg className="ml-[9px]" width="17" height="15" viewBox="0 0 17 15" fill="none" stroke="#fff" strokeWidth="1.100"><path d="M4 1.500h12.400v8.500H6M8 13.500h5M10.500 10v3.500M.6 5.500h4v4h-4zM2.600 9.500v4.500" /></svg>
        <svg className="ml-[7px]" width="17" height="14" viewBox="0 0 17 14" fill="none" stroke="#fff" strokeWidth="1.100"><path d="M1 5v4h2.500L7 12V2L3.500 5zM9 5c1 1 1 3 0 4M11.300 3.300c2 2 2 5.400 0 7.400M13.600 1.500c3 3 3 8 0 11" /></svg>
        <div className="ml-[9px] w-[24px] text-[12px] tracking-[-0.4px]">ENG</div>
        <div className="ml-[8px] w-[66px] text-center text-[12px] leading-[18px] tracking-[-0.4px] whitespace-nowrap">
          <div>7:26 pm</div>
          <div>27/06/2025</div>
        </div>
        <div className="relative mr-[17px] ml-[14px] h-[18px] w-[24px]">
          <svg width="17" height="17" viewBox="0 0 17 17" fill="none" stroke="#fff" strokeWidth="1.200"><path d="M1 1h14.500v11H11l-3 3.500V12H1zM4 4.500h9M4 7.500h9" /></svg>
          <div className="absolute top-1.5 left-2 flex size-[15px] items-center justify-center rounded-full border border-[#999] bg-[#333] text-[10px] leading-none">1</div>
        </div>
      </div>
    </footer>
  );
}

export default function App() {
  return (
    <div className="h-[1080px] w-[1920px] overflow-hidden bg-white font-['Open_Sans',sans-serif]">
      <TabStrip />
      <AddressBar />
      <div className="flex h-[919px] font-['Inter',sans-serif]">
        <LeftPanel />
        <main className="relative w-[1240px] overflow-hidden bg-white">
          <DashboardDesign />
          <Toolbar />
          <div className="absolute top-[498px] right-[4px] h-[50px] w-1 rounded-full bg-[#a6a6a6]" />
          <div className="absolute top-[911px] left-[102px] h-1 w-8 rounded-full bg-[#a6a6a6]" />
        </main>
        <RightPanel />
      </div>
      <Taskbar />
    </div>
  );
}
